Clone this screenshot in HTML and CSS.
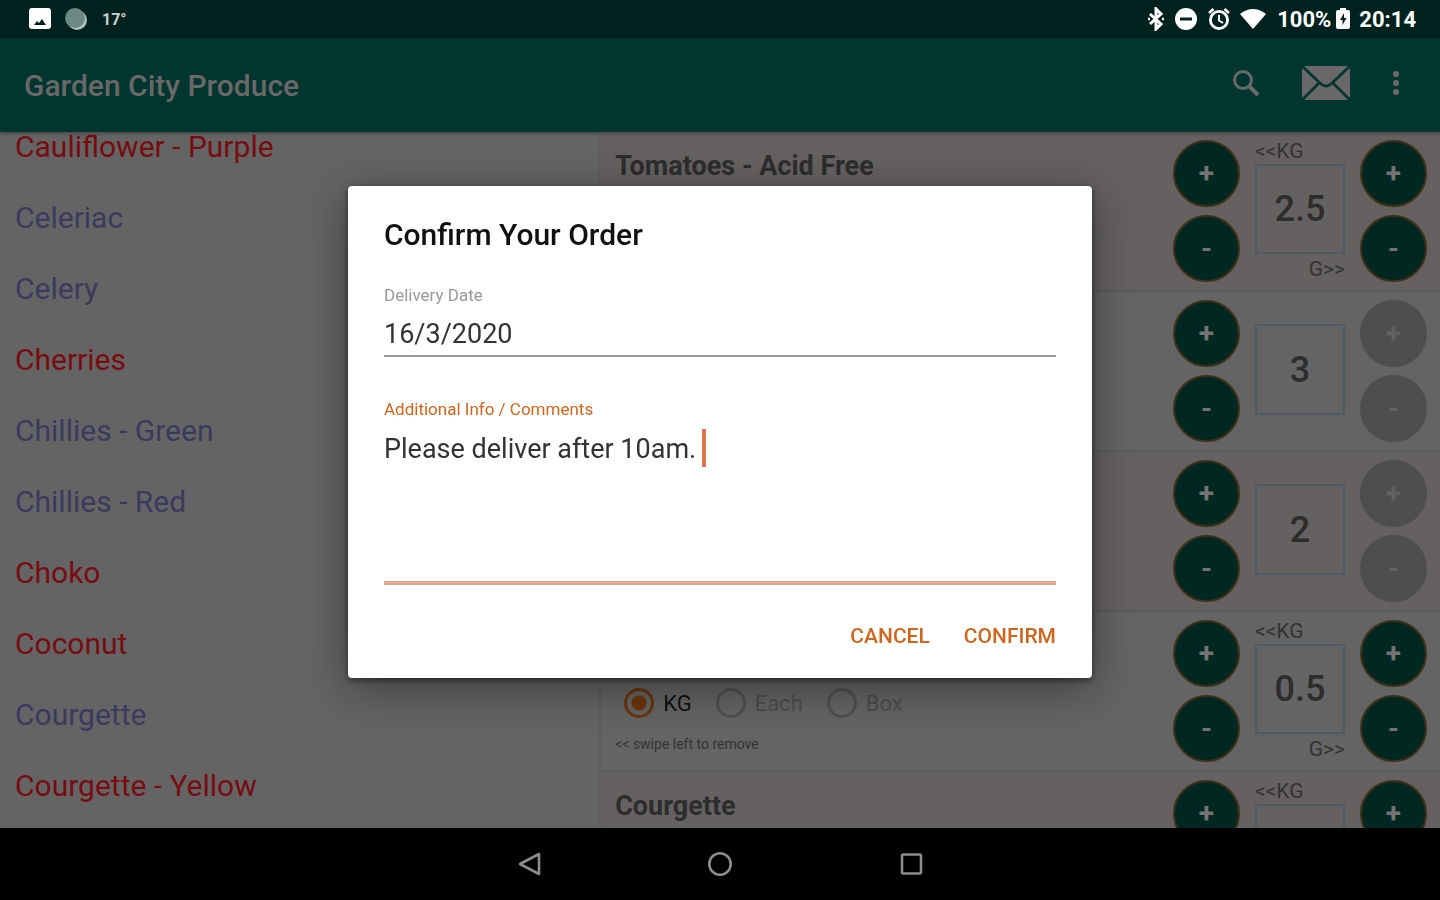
FILE: index.html
```html
<!DOCTYPE html>
<html lang="en">
<head>
  <meta charset="UTF-8" />
  <meta name="viewport" content="width=device-width, initial-scale=1.0" />
  <title>Garden City Produce</title>
  <link rel="stylesheet" href="styles.css">
</head>
<body>
  <div class="status-bar">
    <div class="status-left">
      <svg width="24" height="24" viewBox="0 0 24 24"><rect x="1" y="1" width="22" height="21" rx="3" fill="#fff"/><path d="M6 18l3-4 2 2 3-4 4 6z" fill="#00221f"/></svg>
      <svg width="24" height="24" viewBox="0 0 24 24"><circle cx="13" cy="13" r="10" fill="#b4c0bd"/><circle cx="11" cy="11" r="10" fill="#6d8984"/></svg>
      <span class="temp">17°</span>
    </div>
    <div class="status-right">
      <svg width="18" height="24" viewBox="0 0 18 24"><path d="M3 7l11 10-5 5V2l5 5L3 17" fill="none" stroke="#fff" stroke-width="3"/><path d="M1 12h2M15 12h2" stroke="#fff" stroke-width="2.4"/></svg>
      <svg class="dnd" width="24" height="24" viewBox="0 0 24 24"><circle cx="12" cy="12" r="11" fill="#fff"/><path d="M6 12h12" stroke="#00221f" stroke-width="3"/></svg>
      <svg class="alarm" width="24" height="24" viewBox="0 0 24 24" fill="none" stroke="#fff"><circle cx="12" cy="13" r="8.6" stroke-width="2.8"/><path d="M12 8v5.500l4 2.500" stroke-width="2"/><path d="M2 6l4.500-4M22 6l-4.500-4" stroke-width="2.600"/></svg>
      <svg class="wifi" width="28" height="24" viewBox="0 0 28 24"><path d="M1 7Q14-3 27 7L14 22z" fill="#fff"/></svg>
      <span>100%</span>
      <svg class="battery" width="16" height="24" viewBox="0 0 16 24"><path d="M5 1h6v2h2q2 0 2 2v15q0 2-2 2H3q-2 0-2-2V5q0-2 2-2h2z" fill="#fff"/><path d="M9 6l-4 7h2.500v5l4-7H9z" fill="#00221f"/></svg>
      <span class="clock">20:14</span>
    </div>
  </div>

  <header class="app-bar">
    <h1>Garden City Produce</h1>
    <div class="app-actions">
      <button class="icon-btn" aria-label="Search">
        <svg width="30" height="30" viewBox="0 0 30 30" fill="none" stroke="#696768"><circle cx="12" cy="12" r="8.500" stroke-width="3"/><path d="M18 18l9 9" stroke-width="4"/></svg>
      </button>
      <button class="icon-btn mail" aria-label="Messages">
        <svg width="50" height="36" viewBox="0 0 50 36"><rect x="1" y="1" width="48" height="34" rx="4" fill="#696768"/><path d="M2 2l18 17q5 4 10 0L48 2M2 34l16-16M48 34L32 18" fill="none" stroke="#003530" stroke-width="2.800"/></svg>
      </button>
      <button class="icon-btn" aria-label="More options">
        <svg width="10" height="28" viewBox="0 0 10 28" fill="#696768"><circle cx="5" cy="5" r="3.100"/><circle cx="5" cy="14" r="3.100"/><circle cx="5" cy="23" r="3.100"/></svg>
      </button>
    </div>
  </header>

  <main class="content">
    <ul class="produce-list">
      <li class="red">Cauliflower - Purple</li>
      <li>Celeriac</li>
      <li>Celery</li>
      <li class="red">Cherries</li>
      <li>Chillies - Green</li>
      <li>Chillies - Red</li>
      <li class="red">Choko</li>
      <li class="red">Coconut</li>
      <li>Courgette</li>
      <li class="red">Courgette - Yellow</li>
    </ul>

    <section class="order-list">
      <div class="order-row tinted">
        <div class="details"><h3>Tomatoes - Acid Free</h3></div>
        <div class="stepper">
          <button aria-label="Add one kilo">+</button>
          <button aria-label="Remove one kilo">-</button>
        </div>
        <div class="amount">
          <span class="unit">&lt;&lt;KG</span>
          <input type="text" value="2.5" aria-label="Quantity of acid free tomatoes">
          <span class="unit unit-right">G&gt;&gt;</span>
        </div>
        <div class="stepper">
          <button aria-label="Add grams">+</button>
          <button aria-label="Remove grams">-</button>
        </div>
      </div>

      <div class="order-row">
        <div class="details"></div>
        <div class="stepper">
          <button aria-label="Add one">+</button>
          <button aria-label="Remove one">-</button>
        </div>
        <div class="amount single">
          <input type="text" value="3" aria-label="Quantity">
        </div>
        <div class="stepper">
          <button disabled aria-label="Add grams">+</button>
          <button disabled aria-label="Remove grams">-</button>
        </div>
      </div>

      <div class="order-row tinted">
        <div class="details"></div>
        <div class="stepper">
          <button aria-label="Add one">+</button>
          <button aria-label="Remove one">-</button>
        </div>
        <div class="amount single">
          <input type="text" value="2" aria-label="Quantity">
        </div>
        <div class="stepper">
          <button disabled aria-label="Add grams">+</button>
          <button disabled aria-label="Remove grams">-</button>
        </div>
      </div>

      <div class="order-row">
        <div class="details bottom">
          <div class="units">
            <label><input type="radio" name="unit" checked>KG</label>
            <label class="off"><input type="radio" name="unit" disabled>Each</label>
            <label class="off"><input type="radio" name="unit" disabled>Box</label>
          </div>
          <p class="hint">&lt;&lt; swipe left to remove</p>
        </div>
        <div class="stepper">
          <button aria-label="Add one kilo">+</button>
          <button aria-label="Remove one kilo">-</button>
        </div>
        <div class="amount">
          <span class="unit">&lt;&lt;KG</span>
          <input type="text" value="0.5" aria-label="Quantity">
          <span class="unit unit-right">G&gt;&gt;</span>
        </div>
        <div class="stepper">
          <button aria-label="Add grams">+</button>
          <button aria-label="Remove grams">-</button>
        </div>
      </div>

      <div class="order-row tinted">
        <div class="details"><h3>Courgette</h3></div>
        <div class="stepper">
          <button aria-label="Add one kilo">+</button>
        </div>
        <div class="amount">
          <span class="unit">&lt;&lt;KG</span>
          <input type="text" aria-label="Quantity of courgette">
        </div>
        <div class="stepper">
          <button aria-label="Add grams">+</button>
        </div>
      </div>
    </section>
  </main>

  <nav class="nav-bar">
    <button class="icon-btn" aria-label="Back">
      <svg width="26" height="26" viewBox="0 0 26 26"><path d="M23 3v20L4 13z" fill="none" stroke="#8c8c8c" stroke-width="2.600" stroke-linejoin="round"/></svg>
    </button>
    <button class="icon-btn" aria-label="Home">
      <svg width="26" height="26" viewBox="0 0 26 26"><circle cx="13" cy="13" r="10.700" fill="none" stroke="#8c8c8c" stroke-width="2.600"/></svg>
    </button>
    <button class="icon-btn" aria-label="Recent apps">
      <svg width="26" height="26" viewBox="0 0 26 26"><rect x="4" y="3.500" width="19" height="19" rx="1.500" fill="none" stroke="#8c8c8c" stroke-width="2.600"/></svg>
    </button>
  </nav>

  <div class="overlay">
    <form class="dialog" role="dialog" aria-labelledby="dialog-title">
      <h2 id="dialog-title">Confirm Your Order</h2>
      <div class="field">
        <label for="date">Delivery Date</label>
        <input id="date" type="text" value="16/3/2020">
      </div>
      <div class="field active">
        <label for="comments">Additional Info / Comments</label>
        <textarea id="comments">Please deliver after 10am.</textarea>
        <span class="caret"></span>
      </div>
      <div class="dialog-actions">
        <button type="button">CANCEL</button>
        <button type="button">CONFIRM</button>
      </div>
    </form>
  </div>
</body>
</html>
```

FILE: styles.css
```css
:root {
  --bar: #003530;
  --status: #00221f;
  --page: #646464;
  --tinted: #656161;
  --accent: #d0651b;
  --muted: #696768;
}

* {
  margin: 0;
  padding: 0;
  box-sizing: border-box;
  font-family: Roboto, sans-serif;
}

body {
  display: flex;
  flex-direction: column;
  height: 100vh;
  overflow: hidden;
  background: var(--page);
}

svg {
  display: block;
}

button {
  border: none;
  background: none;
  cursor: pointer;
}

/* status bar */
.status-bar {
  display: flex;
  justify-content: space-between;
  align-items: center;
  flex: none;
  height: 38px;
  padding: 0 24px 0 28px;
  background: var(--status);
  color: #fff;
  font-size: 22px;
  font-weight: 700;
}

.status-left,
.status-right {
  display: flex;
  align-items: center;
}

.status-left {
  gap: 12px;
}

.temp {
  padding-left: 2px;
  font-size: 16px;
  color: #c8d0ce;
}

.dnd,
.alarm {
  margin-left: 9px;
}

.wifi {
  margin: 0 10px 0 8px;
}

.battery {
  margin: 0 8px 0 4px;
}

/* app bar */
.app-bar {
  display: flex;
  justify-content: space-between;
  align-items: center;
  flex: none;
  height: 94px;
  padding: 0 39px 0 24px;
  background: var(--bar);
  box-shadow: 0 1px 4px rgba(0, 0, 0, 0.4);
  z-index: 1;
}

.app-bar h1 {
  font-size: 30px;
  font-weight: 500;
  color: var(--muted);
}

.app-actions {
  display: flex;
  align-items: center;
  gap: 40px;
  padding-bottom: 4px;
}

/* lists */
.content {
  display: flex;
  flex: 1;
  min-height: 0;
}

.produce-list {
  flex: 5;
  list-style: none;
  overflow: hidden;
  margin-top: -21px;
}

.produce-list li {
  height: 71px;
  padding-left: 15px;
  line-height: 71px;
  font-size: 30px;
  color: #3a3a5e;
}

.produce-list .red {
  color: #780c10;
}

.order-list {
  flex: 7;
  overflow: hidden;
  border-left: 2px solid #5e5e5e;
}

.order-row {
  display: flex;
  gap: 15px;
  height: 160px;
  padding: 8px 13px 0 14px;
  border-bottom: 2px solid #5c5b5b;
}

.order-row.tinted {
  background: var(--tinted);
}

.details {
  display: flex;
  flex-direction: column;
  flex: 1;
  padding: 10px 0 16px;
}

.details.bottom {
  justify-content: flex-end;
}

.details h3 {
  line-height: 32px;
  font-size: 27px;
  font-weight: 700;
  color: #2d2d2d;
}

.stepper {
  display: flex;
  flex-direction: column;
  gap: 8px;
}

.stepper button {
  width: 67px;
  height: 67px;
  border: 2px solid #403018;
  border-radius: 50%;
  background: #002720;
  color: #737373;
  font-size: 28px;
  font-weight: 700;
}

.stepper button:disabled {
  border-color: #4e4e4e;
  background: #4e4e4e;
  color: #626262;
}

.amount {
  display: flex;
  flex-direction: column;
  width: 90px;
  height: 142px;
}

.amount.single {
  padding-top: 24px;
}

.amount input {
  width: 100%;
  height: 91px;
  border: 2px solid #4c5a66;
  background: none;
  text-align: center;
  font-size: 36px;
  font-weight: 500;
  color: #2d2d2d;
}

.unit {
  margin-bottom: 2px;
  line-height: 22px;
  font-size: 21px;
  color: #333;
}

.unit-right {
  margin-top: 4px;
  text-align: right;
}

.units {
  display: flex;
  gap: 24px;
  margin-left: 9px;
}

.units label {
  display: flex;
  align-items: center;
  gap: 9px;
  font-size: 22px;
  color: #111;
}

.units .off {
  color: #4c4c4c;
}

.units input {
  appearance: none;
  width: 30px;
  height: 30px;
  border: 3px solid #505050;
  border-radius: 50%;
}

.units input:checked {
  border-color: #6b3410;
  background: radial-gradient(#6b3508 7px, transparent 8px);
}

.hint {
  margin-top: 16px;
  line-height: 20px;
  font-size: 14px;
  color: #333;
}

/* navigation bar */
.nav-bar {
  display: flex;
  justify-content: center;
  align-items: center;
  flex: none;
  gap: 165px;
  height: 72px;
  background: #000;
}

/* dialog */
.overlay {
  position: fixed;
  inset: 38px 0 74px;
  display: flex;
  justify-content: center;
  align-items: center;
  z-index: 10;
}

.dialog {
  width: 744px;
  max-width: 90%;
  padding: 31px 36px 20px;
  border-radius: 4px;
  background: #fff;
  box-shadow: 0 10px 44px rgba(0, 0, 0, 0.4), 0 2px 6px rgba(0, 0, 0, 0.5);
}

.dialog h2 {
  line-height: 36px;
  font-size: 30px;
  font-weight: 500;
  color: #111;
}

.field {
  position: relative;
  display: flex;
  flex-direction: column;
  margin-top: 30px;
}

.field label {
  line-height: 24px;
  font-size: 17px;
  color: #999;
}

.field input,
.field textarea {
  border: none;
  border-bottom: 2px solid #999;
  outline: none;
  resize: none;
  background: none;
  font-size: 27px;
  color: #333;
}

.field input {
  height: 50px;
  padding-top: 6px;
}

.field textarea {
  height: 164px;
  padding-top: 10px;
  line-height: 36px;
  border-bottom: 4px solid #e5a78e;
}

.field.active {
  margin-top: 40px;
}

.field.active label {
  color: var(--accent);
}

.caret {
  position: absolute;
  top: 32px;
  left: 318px;
  width: 4px;
  height: 38px;
  background: #d9794f;
}

.dialog-actions {
  display: flex;
  justify-content: flex-end;
  gap: 34px;
  margin-top: 29px;
}

.dialog-actions button {
  height: 44px;
  font-size: 21px;
  font-weight: 500;
  color: var(--accent);
}
```
